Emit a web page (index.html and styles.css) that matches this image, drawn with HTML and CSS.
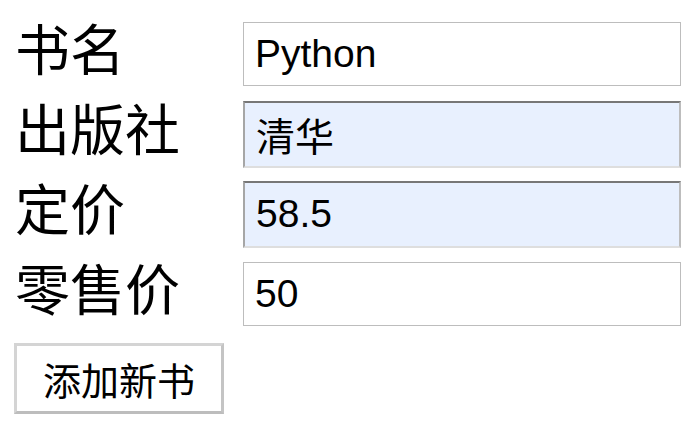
FILE: index.html
```html
<!DOCTYPE html>
<html lang="zh">
<head>
<meta charset="utf-8">
<link rel="stylesheet" href="styles.css">
</head>
<body>
<form class="book-form">
  <div class="row">
    <label class="label">书名</label>
    <input class="field" type="text" value="Python">
  </div>
  <div class="row">
    <label class="label">出版社</label>
    <input class="field filled" type="text" value="清华">
  </div>
  <div class="row">
    <label class="label">定价</label>
    <input class="field filled" type="text" value="58.5">
  </div>
  <div class="row">
    <label class="label">零售价</label>
    <input class="field" type="text" value="50">
  </div>
  <button class="submit" type="button">添加新书</button>
</form>
</body>
</html>
```
FILE: styles.css
```css
html, body {
  margin: 0;
  padding: 0;
  background: #ffffff;
}
.book-form {
  padding: 14px 0 0 14px;
  font-family: "Liberation Sans", "Noto Sans CJK SC", sans-serif;
  color: #000;
}
.row {
  display: flex;
  align-items: center;
  height: 80px;
}
.label {
  width: 229px;
  box-sizing: border-box;
  padding: 0 0 16px 1px;
  font-family: "Noto Sans CJK SC", sans-serif;
  font-size: 55px;
  line-height: 60px;
}
.field {
  box-sizing: border-box;
  width: 438px;
  height: 64px;
  margin: 0;
  padding: 0 0 0 11px;
  border: 1px solid #bdbdbd;
  background: #ffffff;
  font-family: "Liberation Sans", "Noto Sans CJK SC", sans-serif;
  font-size: 39px;
  color: #000;
  outline: none;
}
.field.filled {
  height: 67px;
  padding-left: 11px;
  background: #e8f0fe;
  border-width: 2px;
  border-style: solid;
  border-top-color: #777777;
  border-left-color: #a6a6a6;
  border-right-color: #bdbdbd;
  border-bottom-color: #dedede;
}
.submit {
  display: block;
  box-sizing: border-box;
  margin-top: 9px;
  width: 210px;
  height: 71px;
  padding: 0;
  background: #ffffff;
  border: 3px solid #d4d4d4;
  border-right-color: #c4c4c4;
  border-bottom-color: #bdbdbd;
  font-family: "Noto Sans CJK SC", sans-serif;
  font-size: 38px;
  color: #000;
}
```
